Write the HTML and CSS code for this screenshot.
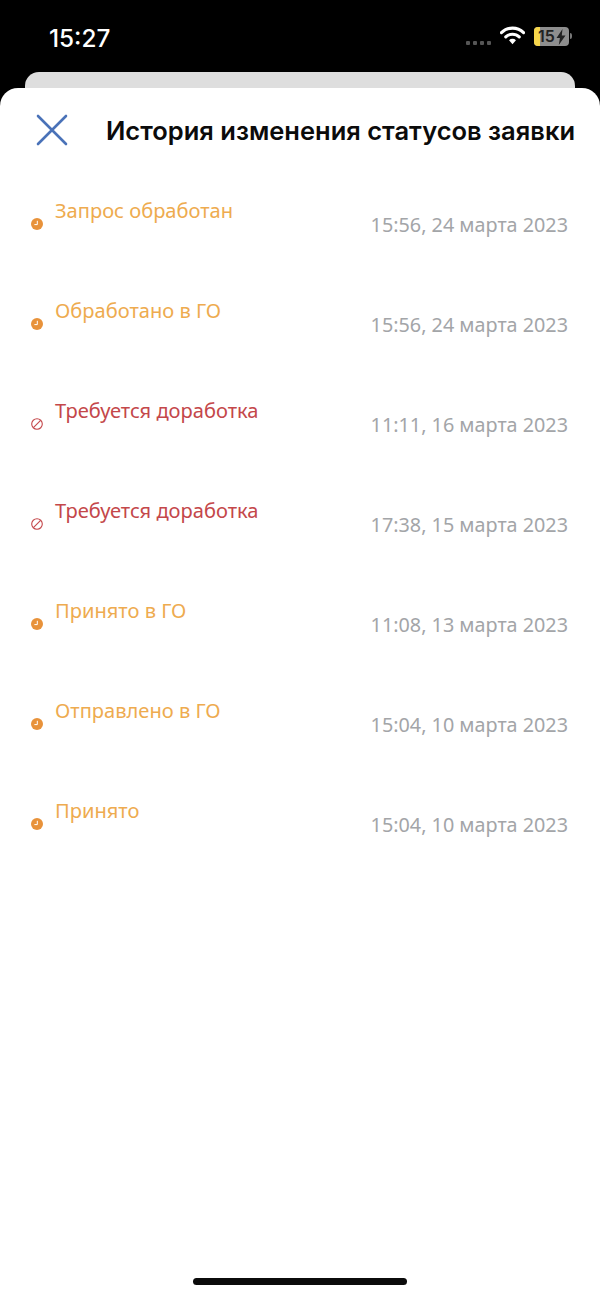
FILE: index.html
```html
<!DOCTYPE html>
<html lang="ru">

<head>
    <meta charset="UTF-8">
    <meta name="viewport" content="width=device-width, initial-scale=1.0">
    <title>История изменения статусов заявки</title>
    <link rel="stylesheet" href="styles.css">
</head>

<body>
    <div class="statusbar">
        <span class="clock">15:27</span>
        <div class="indicators">
            <div class="signal"><i></i><i></i><i></i><i></i></div>
            <svg class="wifi" width="25" height="20" viewBox="0 0 26 20">
                <path d="M1.5 7.5a16.5 16.5 0 0 1 23 0" fill="none" stroke="#fff" stroke-width="3.2" stroke-linecap="round"/>
                <path d="M6 12a10 10 0 0 1 14 0" fill="none" stroke="#fff" stroke-width="3.2" stroke-linecap="round"/>
                <path d="M13 19.5l-3.6-4.1a5.2 5.2 0 0 1 7.2 0z" fill="#fff"/>
            </svg>
            <div class="battery">
                <div class="battery-fill"></div>
                <span class="battery-level">15</span>
                <svg class="bolt" width="10" height="16" viewBox="0 0 10 16"><path d="M6.5 0L0.5 9h3.4L2.8 16 9.5 6.500H5.800z" fill="#222"/></svg>
            </div>
            <div class="battery-cap"></div>
        </div>
    </div>

    <div class="back-card"></div>

    <div class="sheet">
        <div class="sheet-head">
            <svg class="close" width="32" height="32" viewBox="0 0 32 32">
                <path d="M2 2L30 30M30 2L2 30" stroke="#4a72b8" stroke-width="2.600" stroke-linecap="round"/>
            </svg>
            <h1>История изменения статусов заявки</h1>
        </div>

        <ul class="history">
            <li class="row">
                <svg class="ico" width="12" height="12" viewBox="0 0 12 12"><circle cx="6" cy="6" r="6" fill="#e8923a"/><path d="M6.300 2.800V6.600H3.400" fill="none" stroke="#fff" stroke-width="1"/></svg>
                <span class="status pending">Запрос обработан</span>
                <span class="date">15:56, 24 марта 2023</span>
            </li>
            <li class="row">
                <svg class="ico" width="12" height="12" viewBox="0 0 12 12"><circle cx="6" cy="6" r="6" fill="#e8923a"/><path d="M6.300 2.800V6.600H3.400" fill="none" stroke="#fff" stroke-width="1"/></svg>
                <span class="status pending">Обработано в ГО</span>
                <span class="date">15:56, 24 марта 2023</span>
            </li>
            <li class="row">
                <svg class="ico" width="12" height="12" viewBox="0 0 12 12"><circle cx="6" cy="6" r="5.300" fill="none" stroke="#c4474a" stroke-width="1.100"/><path d="M2.400 9.600L9.600 2.400" stroke="#c4474a" stroke-width="1.100"/></svg>
                <span class="status rework">Требуется доработка</span>
                <span class="date">11:11, 16 марта 2023</span>
            </li>
            <li class="row">
                <svg class="ico" width="12" height="12" viewBox="0 0 12 12"><circle cx="6" cy="6" r="5.300" fill="none" stroke="#c4474a" stroke-width="1.100"/><path d="M2.400 9.600L9.600 2.400" stroke="#c4474a" stroke-width="1.100"/></svg>
                <span class="status rework">Требуется доработка</span>
                <span class="date">17:38, 15 марта 2023</span>
            </li>
            <li class="row">
                <svg class="ico" width="12" height="12" viewBox="0 0 12 12"><circle cx="6" cy="6" r="6" fill="#e8923a"/><path d="M6.300 2.800V6.600H3.400" fill="none" stroke="#fff" stroke-width="1"/></svg>
                <span class="status pending">Принято в ГО</span>
                <span class="date">11:08, 13 марта 2023</span>
            </li>
            <li class="row">
                <svg class="ico" width="12" height="12" viewBox="0 0 12 12"><circle cx="6" cy="6" r="6" fill="#e8923a"/><path d="M6.300 2.800V6.600H3.400" fill="none" stroke="#fff" stroke-width="1"/></svg>
                <span class="status pending">Отправлено в ГО</span>
                <span class="date">15:04, 10 марта 2023</span>
            </li>
            <li class="row">
                <svg class="ico" width="12" height="12" viewBox="0 0 12 12"><circle cx="6" cy="6" r="6" fill="#e8923a"/><path d="M6.300 2.800V6.600H3.400" fill="none" stroke="#fff" stroke-width="1"/></svg>
                <span class="status pending">Принято</span>
                <span class="date">15:04, 10 марта 2023</span>
            </li>
        </ul>

        <div class="home-bar"></div>
    </div>
</body>

</html>
```

FILE: styles.css
```css
* {
    padding: 0;
    margin: 0;
    box-sizing: border-box;
}

html,
body {
    height: 1297px;
    overflow: hidden;
}

body {
    background-color: #000;
    display: flex;
    flex-direction: column;
    font-family: "Noto Sans", sans-serif;
}

.statusbar {
    height: 72px;
    flex: none;
    display: flex;
    justify-content: space-between;
    padding: 23px 28px 0 49px;
}

.clock {
    color: #fff;
    font-family: Inter, sans-serif;
    font-size: 24.3px;
    font-weight: 500;
    line-height: 30px;
}

.indicators {
    display: flex;
    align-items: flex-start;
    height: 24px;
    margin-top: 2px;
}

.signal {
    display: flex;
    gap: 3px;
    margin: 16px 9px 0 0;
}

.signal i {
    width: 4px;
    height: 4px;
    border-radius: 1px;
    background-color: #555;
}

.wifi {
    margin: 0 9px 0 0;
}

.battery {
    position: relative;
    width: 35px;
    height: 19px;
    margin-top: 2px;
    border-radius: 4px;
    background-color: #8e8e8e;
    overflow: hidden;
    display: flex;
    align-items: center;
    padding-left: 4px;
}

.battery-fill {
    position: absolute;
    left: 0;
    top: 0;
    width: 6px;
    height: 100%;
    background-color: #f6d54a;
}

.battery-level {
    position: relative;
    color: #222;
    font-family: Inter, sans-serif;
    font-size: 16px;
    font-weight: 600;
    line-height: 19px;
}

.bolt {
    position: relative;
    margin-left: 1px;
}

.battery-cap {
    width: 2px;
    height: 6px;
    margin: 8px 0 0 1px;
    border-radius: 0 2px 2px 0;
    background-color: #777;
}

.back-card {
    height: 16px;
    flex: none;
    margin: 0 25px;
    background-color: #dedede;
    border-radius: 14px 14px 0 0;
}

.sheet {
    flex: 1;
    display: flex;
    flex-direction: column;
    background-color: #fff;
    border-radius: 18px 18px 0 0;
}

.sheet-head {
    display: flex;
    align-items: center;
    height: 84px;
    padding-left: 36px;
}

.close {
    flex: none;
    margin-right: 38px;
}

h1 {
    color: #0b0b0b;
    font-family: Inter, sans-serif;
    font-size: 25.5px;
    font-weight: 600;
    white-space: nowrap;
}

.history {
    flex: 1;
    list-style: none;
    padding-top: 3px;
}

.row {
    position: relative;
    height: 100px;
    display: flex;
    justify-content: space-between;
    padding: 22px 32px 0 31px;
}

.ico {
    flex: none;
    margin: 21px 12px 0 0;
}

.status {
    flex: 1;
    font-size: 20.1px;
    line-height: 27px;
}

.pending {
    color: #eeab4f;
}

.rework {
    color: #c4474a;
}

.date {
    color: #a3a5a8;
    font-size: 19.8px;
    line-height: 27px;
    margin-top: 14px;
}

.home-bar {
    width: 214px;
    height: 7px;
    flex: none;
    margin: 0 auto 12px;
    border-radius: 4px;
    background-color: #0b0b0b;
}
```
